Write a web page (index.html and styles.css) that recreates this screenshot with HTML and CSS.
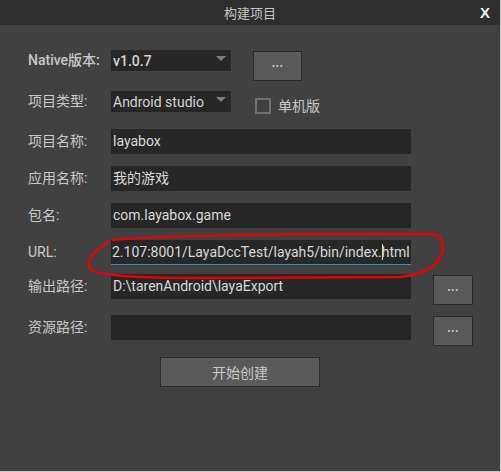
FILE: index.html
```html
<!DOCTYPE html>
<html>
<head>
<meta charset="utf-8">
<link rel="stylesheet" href="styles.css">
</head>
<body>
<div class="window">
  <div class="titlebar">
    <span></span>
    <span class="title">构建项目</span>
    <span class="close">X</span>
  </div>
  <div class="form">
    <div class="row r1">
      <span class="label">Native版本:</span>
      <div class="select"><span>v1.0.7</span><i class="arrow"></i></div>
      <button class="btn dots b1">...</button>
    </div>
    <div class="row r2">
      <span class="label">项目类型:</span>
      <div class="select"><span>Android studio</span><i class="arrow"></i></div>
      <span class="check"></span>
      <span class="checklabel">单机版</span>
    </div>
    <div class="row r3">
      <span class="label">项目名称:</span>
      <div class="input">layabox</div>
    </div>
    <div class="row r3">
      <span class="label">应用名称:</span>
      <div class="input cjk">我的游戏</div>
    </div>
    <div class="row r3">
      <span class="label">包名:</span>
      <div class="input">com.layabox.game</div>
    </div>
    <div class="row r6">
      <span class="label">URL:</span>
      <div class="input focus">2.107:8001/LayaDccTest/layah5/bin/index.<span class="caret"></span>html</div>
    </div>
    <div class="row r7">
      <span class="label">输出路径:</span>
      <div class="input">D:\tarenAndroid\layaExport</div>
      <button class="btn dots b2">...</button>
    </div>
    <div class="row r8">
      <span class="label">资源路径:</span>
      <div class="input"></div>
      <button class="btn dots b2">...</button>
    </div>
    <div class="actions">
      <button class="btn start">开始创建</button>
    </div>
  </div>
  <svg class="mark" width="501" height="472" viewBox="0 0 501 472">
    <path d="M112 240 C150 236 300 233 433 234 C447 236 445 258 433 266 C425 272 412 276 400 277 L200 278 C150 278 100 276 92 270 C84 264 90 253 110 241" fill="none" stroke="#e8000a" stroke-width="2.4"/>
  </svg>
</div>
</body>
</html>
```
FILE: styles.css
```css
* { box-sizing: border-box; }
html, body { margin: 0; padding: 0; background: #414141; }
body { width: 501px; height: 472px; overflow: hidden; }
.window {
  position: relative;
  width: 501px;
  height: 472px;
  background: #414141;
  border-right: 1px solid #c9c9c9;
  border-bottom: 1px solid #c9c9c9;
  font-family: "Noto Sans CJK SC", sans-serif;
}
.titlebar {
  height: 25px;
  background: #2e2e2e;
  display: grid;
  grid-template-columns: 1fr auto 1fr;
  align-items: center;
}
.title {
  color: #c4c4c4;
  font-size: 13px;
  line-height: 25px;
}
.close {
  justify-self: end;
  margin-right: 10px;
  color: #f2f2f2;
  font-family: "Liberation Sans", sans-serif;
  font-weight: bold;
  font-size: 15px;
  line-height: 25px;
}
.form {
  padding: 25px 0 0 28px;
  display: flex;
  flex-direction: column;
}
.row {
  display: flex;
  align-items: flex-start;
}
.r1 { height: 41px; }
.r2 { height: 38px; }
.r3 { height: 37px; }
.r6 { height: 34px; }
.r7 { height: 41px; }
.r8 { height: 42px; }
.label {
  width: 83px;
  color: #c8c8c8;
  font-size: 14px;
  line-height: 25px;
  font-family: "Roboto", "Noto Sans CJK SC", sans-serif;
}
.r1 .label, .r2 .label { line-height: 21px; }
.r1 .label { font-weight: 500; }
.select {
  width: 120px;
  height: 21px;
  background: #272727;
  display: flex;
  align-items: center;
  justify-content: space-between;
  padding: 0 5px 0 2px;
  color: #d4d4d4;
  font-family: "Roboto", sans-serif;
  font-size: 14px;
}
.r1 .select span { font-weight: 500; }
.arrow {
  width: 0;
  height: 0;
  border-left: 5px solid transparent;
  border-right: 5px solid transparent;
  border-top: 5px solid #7c7c7c;
  margin-top: -4px;
}
.input {
  width: 300px;
  height: 25px;
  background: #272727;
  color: #d9d9d9;
  font-family: "Roboto", "Noto Sans CJK SC", sans-serif;
  font-size: 14px;
  line-height: 25px;
  padding-left: 2px;
  white-space: nowrap;
  overflow: hidden;
}
.input.focus {
  border-bottom: 1px solid #3e8ec6;
  line-height: 24px;
  padding-left: 1px;
}
.caret {
  display: inline-block;
  width: 1px;
  height: 16px;
  background: #e0e0e0;
  vertical-align: -3px;
  margin-right: -1px;
}
.btn {
  background: #5a5a5a;
  border: 1px solid #2a2a2a;
  color: #bdbdbd;
  padding: 0;
  font-family: "Noto Sans CJK SC", sans-serif;
}
.dots {
  font-family: "Liberation Sans", sans-serif;
  font-size: 12px;
  font-weight: bold;
  line-height: 12px;
  padding-bottom: 7px;
  letter-spacing: 0.5px;
  color: #c4c4c4;
}
.b1 {
  width: 49px;
  height: 30px;
  margin: 1px 0 0 22px;
}
.b2 {
  width: 40px;
  height: 30px;
  margin: 1px 0 0 22px;
}
.check {
  width: 16px;
  height: 16px;
  border: 2px solid #707070;
  margin: 7px 0 0 24px;
}
.checklabel {
  color: #c8c8c8;
  font-size: 14px;
  line-height: 16px;
  margin: 6px 0 0 7px;
}
.actions {
  display: flex;
  padding-left: 132px;
}
.start {
  width: 160px;
  height: 30px;
  font-size: 14px;
  color: #c8c8c8;
}
.mark {
  position: absolute;
  left: 0;
  top: 0;
  pointer-events: none;
}
```
